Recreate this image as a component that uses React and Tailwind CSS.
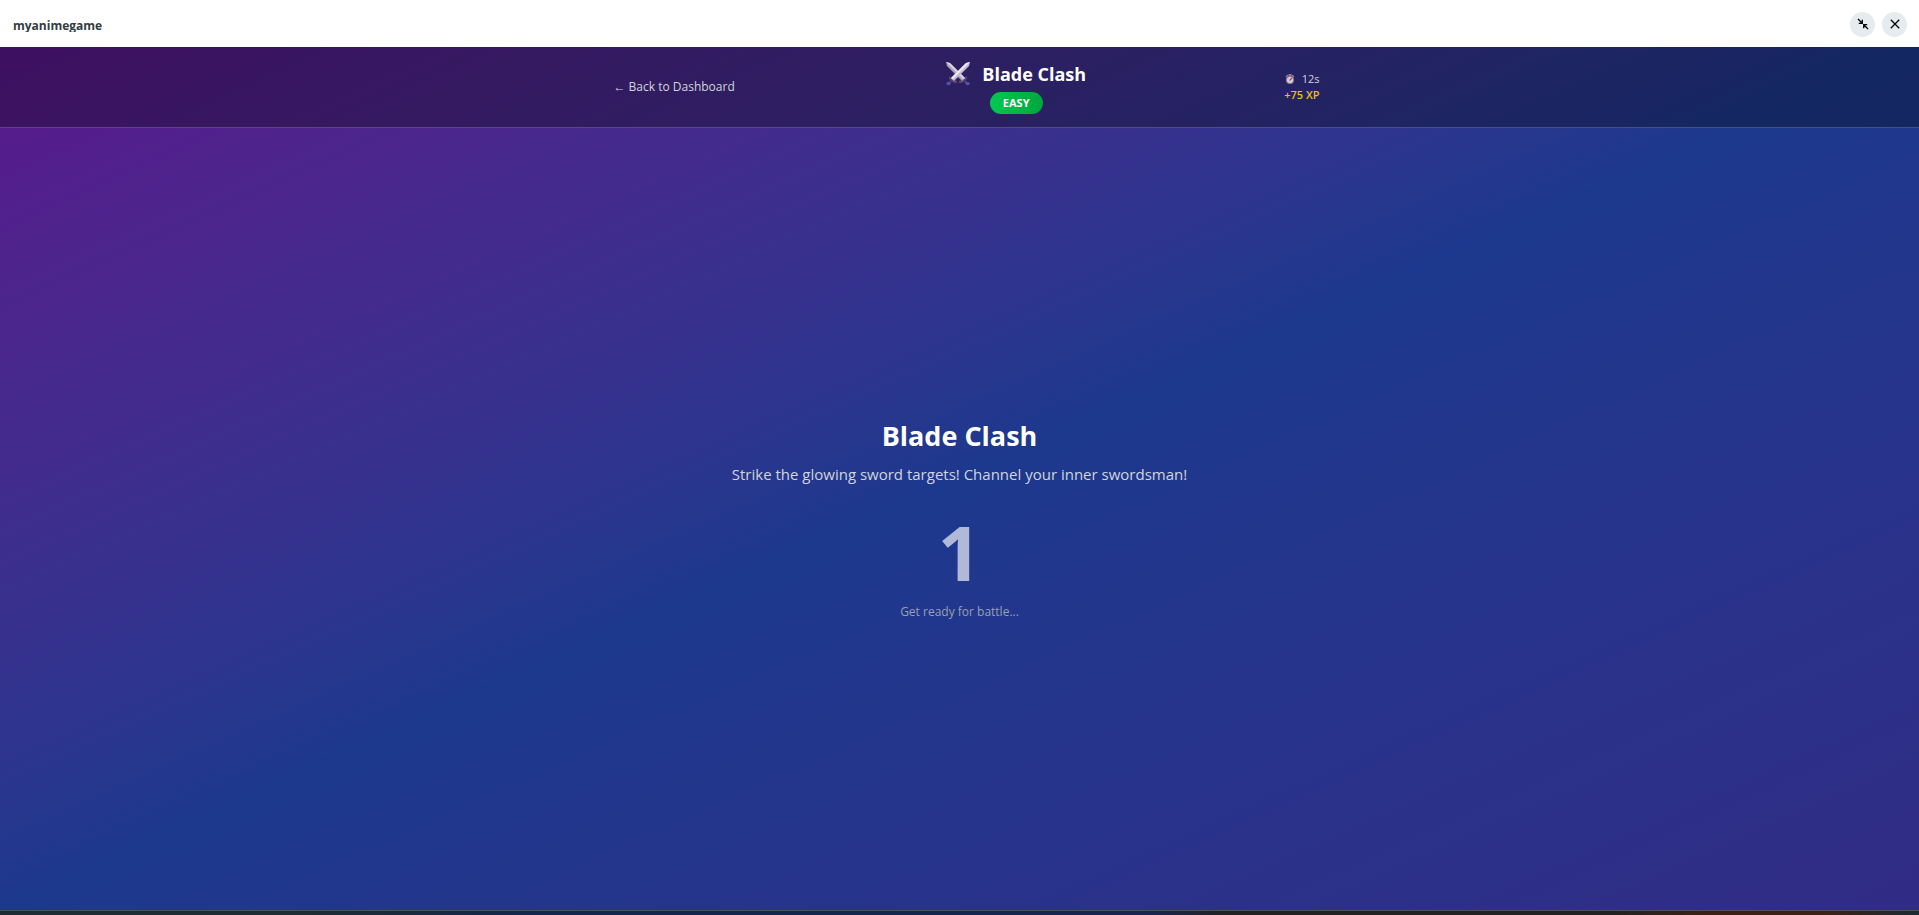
import { useState } from "react";

const game = {
    title: "Blade Clash",
    difficulty: "EASY",
    duration: 12,
    xp: 75,
    description: "Strike the glowing sword targets! Channel your inner swordsman!",
};

function SwordsIcon() {
    return (
        <svg viewBox="0 0 24 24" className="h-6 w-6" aria-hidden="true">
            <path d="M4 14c1 3.500 3.500 4.500 7 4.500l-.2 2.500c-4 .3-7.500-2-8-6z" fill="#5f4a70" />
            <path d="M20 14c-1 3.500-3.500 4.500-7 4.500l.2 2.500c4 .3 7.500-2 8-6z" fill="#5f4a70" />
            <path d="M0 0l4 1L19 16l-3 3L1 4z" fill="#aaa2b8" />
            <path d="M0 0l4 1L19 16l-1.500 1.500z" fill="#d9d4e0" />
            <path d="M24 0l-4 1L5 16l3 3L23 4z" fill="#c2bbce" />
            <path d="M24 0l-4 1L5 16l1.500 1.500z" fill="#ece8f0" />
            <path d="M5.500 17.500l1.500 1.500-3.500 3L2 20.500z" fill="#4a3b72" />
            <path d="M18.500 17.500L17 19l3.500 3 1.500-1.500z" fill="#4a3b72" />
            <ellipse cx="2.500" cy="21.500" rx="2.200" ry="1.800" fill="#5b50a5" />
            <ellipse cx="21.500" cy="21.500" rx="2.200" ry="1.800" fill="#5b50a5" />
        </svg>
    );
}

function StopwatchIcon() {
    return (
        <svg viewBox="0 0 12 12" className="h-3 w-3" aria-hidden="true">
            <rect x="4.500" y="1" width="3" height="2" fill="#8d7f92" />
            <path d="M1.500 3.500l2-2 1 1-2 2zM10.500 3.500l-2-2-1 1 2 2z" fill="#8d7f92" />
            <circle cx="6" cy="7" r="3.700" fill="#d5ccd9" stroke="#84788f" />
            <path d="M5.500 7.500L8 5" stroke="#c93a55" strokeWidth="1.300" />
        </svg>
    );
}

function WindowBar({ onClose }) {
    return (
        <div className="flex h-[47px] items-center justify-between bg-white px-3 pt-px">
            <span className="h-4 overflow-hidden pl-px text-xs leading-5 font-bold text-[#333d42]">
                myanimegame
            </span>
            <div className="flex gap-[7px]">
                <button
                    aria-label="Exit full screen"
                    className="flex h-[25px] w-[25px] items-center justify-center rounded-full bg-[#e5ebee]"
                >
                    <svg viewBox="0 0 12 12" className="h-3 w-3" fill="none" stroke="#000" strokeWidth="1.300">
                        <path d="M1 1l4 4M5.300 1.800v3.500H1.800M11 11L7 7M6.700 10.200V6.700h3.500" />
                    </svg>
                </button>
                <button
                    aria-label="Close"
                    onClick={onClose}
                    className="flex h-[25px] w-[25px] items-center justify-center rounded-full bg-[#e5ebee]"
                >
                    <svg viewBox="0 0 12 12" className="h-3 w-3" fill="none" stroke="#000" strokeWidth="1.300">
                        <path d="M1.800 1.800l8.400 8.400M10.200 1.800l-8.400 8.400" />
                    </svg>
                </button>
            </div>
        </div>
    );
}

function GameHeader() {
    return (
        <header className="border-b border-white/20 bg-black/30">
            <div className="mx-auto flex max-w-3xl items-center justify-between px-6 pt-[11px] pb-[13px]">
                <button className="px-3.5 pt-2.5 pb-2 text-xs text-gray-300">
                    ← Back to Dashboard
                </button>

                <div className="flex flex-col items-center gap-0.5">
                    <div className="flex h-8 items-center gap-3">
                        <SwordsIcon />
                        <h1 className="text-lg leading-7 font-bold">{game.title}</h1>
                    </div>
                    <span className="rounded-full bg-linear-to-r from-[#00c950] to-[#00a63e] px-[13px] py-[3px] text-[11px] leading-4 font-bold">
                        {game.difficulty}
                    </span>
                </div>

                <div className="flex flex-col items-end pt-0.5 text-[11px] leading-4">
                    <div className="flex items-center gap-1.5 text-gray-300">
                        <StopwatchIcon />
                        {game.duration}s
                    </div>
                    <div className="font-semibold text-[#eac00f]">+{game.xp} XP</div>
                </div>
            </div>
        </header>
    );
}

export default function App() {
    const [open, setOpen] = useState(true);

    if (!open) return null;

    return (
        <div className="flex min-h-screen flex-col font-['Open_Sans','Noto_Sans',sans-serif]">
            <WindowBar onClose={() => setOpen(false)} />

            <div className="flex flex-1 flex-col bg-linear-to-br from-purple-900 via-blue-900 to-indigo-900 text-white">
                <GameHeader />

                <main className="flex flex-1 flex-col items-center justify-center text-center">
                    <h2 className="mb-2 text-[27px] leading-9 font-bold">{game.title}</h2>
                    <p className="mb-6 text-[15px] leading-6 text-gray-300">{game.description}</p>
                    <div className="mb-2.5 text-[76px] leading-21 font-bold text-white/65">1</div>
                    <p className="text-xs text-gray-400">Get ready for battle...</p>
                </main>
            </div>

            <div className="h-[5px] border-t border-[#4d5258] bg-[linear-gradient(90deg,#1e2c33_0%,#1e2c33_16%,#12264e_28%,#12264e_50%,#1a2450_60%,#222222_64%,#222222_84%,#3d2014_89%,#3d2014_95%,#1c2a33_100%)]"></div>
        </div>
    );
}
